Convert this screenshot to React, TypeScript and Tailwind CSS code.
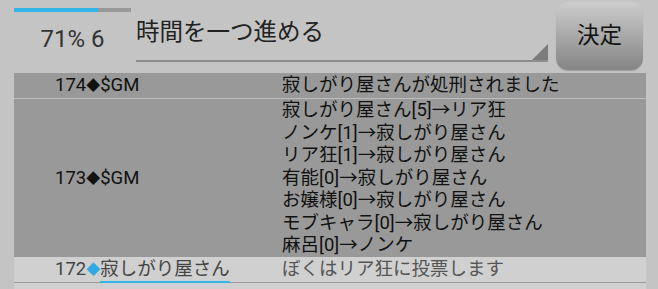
import { ReactNode } from "react";

const votes = [
  "寂しがり屋さん[5]→リア狂",
  "ノンケ[1]→寂しがり屋さん",
  "リア狂[1]→寂しがり屋さん",
  "有能[0]→寂しがり屋さん",
  "お嬢様[0]→寂しがり屋さん",
  "モブキャラ[0]→寂しがり屋さん",
  "麻呂[0]→ノンケ",
];

const Diamond = ({ className = "" }: { className?: string }) => (
  <span className={`text-[14px] align-[1px] ${className}`}>◆</span>
);

function Row({ left, children, className }: { left: ReactNode; children: ReactNode; className: string }) {
  return (
    <div className={`grid grid-cols-[268px_1fr] items-center ${className}`}>
      <div className="pl-[41px] whitespace-nowrap">{left}</div>
      <div className="whitespace-nowrap">{children}</div>
    </div>
  );
}

export default function App() {
  return (
    <div
      className="w-[658px] h-[289px] overflow-hidden bg-[#c4c4c4] text-[#111]"
      style={{ fontFamily: 'Roboto, "Noto Sans CJK JP", sans-serif' }}
    >
      {/* Header */}
      <div className="flex h-[73px]">
        <div className="w-[136px] pl-[14px] pt-[8px]">
          <div className="flex h-[4px] w-[117px] bg-[#999]">
            <div className="w-[72%] bg-[#33b5e5]" />
          </div>
          <div className="w-[117px] text-center text-[24px] leading-[28px] mt-[13px] text-[#333]">71% 6</div>
        </div>

        <div className="relative w-[412px] h-[62px] border-b-2 border-[#8e8e8e]">
          <div className="pt-[16px] text-[23.5px] leading-[32px] text-[#222]">時間を一つ進める</div>
          <div className="absolute right-0 bottom-0 w-0 h-0 border-l-[16px] border-l-transparent border-b-[16px] border-b-[#7c7c7c]" />
        </div>

        <button className="ml-[8px] mt-[2px] w-[87px] h-[68px] rounded-[12px] bg-gradient-to-b from-[#cdcdcd] to-[#858585] text-[22.5px] text-[#111] shadow-[0_1px_1px_rgba(0,0,0,0.2)]">
          決定
        </button>
      </div>

      {/* Log */}
      <div className="ml-[14px] w-[632px] text-[18.5px] leading-[22.5px]">
        <Row left={<>174<Diamond />$GM</>} className="h-[26px] bg-[#999] border-b border-[#bdbdbd]">
          寂しがり屋さんが処刑されました
        </Row>
        <Row left={<>173<Diamond />$GM</>} className="h-[158px] bg-[#999]">
          {votes.map((v) => (
            <div key={v}>{v}</div>
          ))}
        </Row>
        <Row
          left={
            <span className="text-[#444]">
              172<Diamond className="text-[#33a9e3]" />
              <span className="border-b-2 border-[#33b5e5] pb-[1px]">寂しがり屋さん</span>
            </span>
          }
          className="h-[26px] bg-[#d0d0d0] border-b border-[#9a9a9a]"
        >
          <span className="text-[#555]">ぼくはリア狂に投票します</span>
        </Row>
        <div className="h-[10px] bg-[#d0d0d0]" />
      </div>
    </div>
  );
}
